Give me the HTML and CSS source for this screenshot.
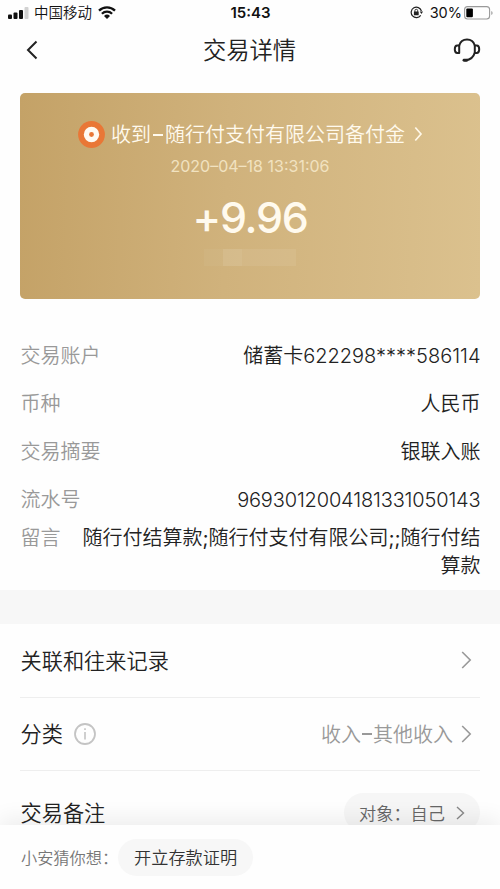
FILE: index.html
```html
<!DOCTYPE html>
<html lang="zh-CN">
<head>
<meta charset="utf-8">
<meta name="viewport" content="width=device-width, initial-scale=1">
<title>交易详情</title>
<link rel="stylesheet" href="styles.css">
</head>
<body>
<div class="screen">
  <div class="status">
    <div class="status-left">
      <svg class="signal" width="21" height="12" viewBox="0 0 21 12"><rect x="0" y="7.5" width="4" height="4.5" rx="1" fill="#111"/><rect x="5.5" y="5.5" width="4" height="6.5" rx="1" fill="#111"/><rect x="11" y="3" width="4" height="9" rx="1" fill="#111"/><rect x="16.5" y="0" width="4" height="12" rx="1" fill="#d2d2d2"/></svg>
      <span class="carrier">中国移动</span>
      <svg class="wifi" width="18" height="13" viewBox="0 0 18 13"><path d="M1 4.7a11.5 11.5 0 0 1 16 0M3.9 7.8a7.3 7.3 0 0 1 10.2 0" fill="none" stroke="#111" stroke-width="2.3"/><path d="M9 13l-3-3a4.4 4.4 0 0 1 6 0z" fill="#111"/></svg>
    </div>
    <div class="clock">15:43</div>
    <div class="status-right">
      <svg class="lock" width="13" height="13" viewBox="0 0 13 13"><path d="M10.7 9.3A5.2 5.2 0 1 1 11.4 5" fill="none" stroke="#222" stroke-width="1.2"/><path d="M9.7 5.5h3.3l-1.5 2.4z" fill="#222"/><rect x="3.9" y="5.6" width="4.8" height="3.6" rx=".5" fill="#222"/><path d="M4.9 6V4.7a1.4 1.4 0 0 1 2.8 0V6" fill="none" stroke="#222" stroke-width=".9"/></svg>
      <span class="percent">30%</span>
      <svg class="battery" width="29" height="14" viewBox="0 0 29 14"><rect x=".6" y=".6" width="25" height="12.4" rx="3" fill="none" stroke="#999" stroke-width="1.1"/><rect x="2.3" y="2.4" width="6.6" height="8.8" rx="1" fill="#000"/><path d="M27.3 5v4q1.3-.5 1.3-2t-1.3-2" fill="#999"/></svg>
    </div>
  </div>
  <header class="nav">
    <svg class="back" width="12" height="20" viewBox="0 0 12 20"><path d="M10.5 1.5L2 10l8.500 8.500" fill="none" stroke="#222" stroke-width="2"/></svg>
    <h1 class="title">交易详情</h1>
    <svg class="service" width="28" height="26" viewBox="0 0 28 26"><g fill="none" stroke="#222" stroke-width="2" stroke-linecap="round" stroke-linejoin="round"><path d="M6.200 8.500C7.400 4.300 10.300 2.600 14 2.600S20.600 4.300 21.800 8.500V15.500Q20 22.500 12.500 23.300"/><path d="M6.200 8.500v7.500H4.200Q1.800 16 1.800 12.250T4.200 8.500zM21.800 8.500h2Q26.200 8.500 26.200 12.250T23.800 16h-2"/><path d="M11 23.300h2.800" stroke-width="2.900"/></g></svg>
  </header>
  <section class="card">
    <div class="payer">
      <svg class="payer-logo" width="27" height="27" viewBox="0 0 27 27"><circle cx="13.500" cy="13.500" r="13.400" fill="#e97736"/><circle cx="13.500" cy="13.500" r="7.700" fill="#fffaf2"/><circle cx="13.500" cy="13.500" r="2.400" fill="#e97736"/></svg>
      <span class="payer-name">收到<span class="dash"></span>随行付支付有限公司备付金</span>
      <svg class="payer-arrow" width="9" height="16" viewBox="0 0 9 16"><path d="M1.300 1.500L7 8l-5.700 6.500" fill="none" stroke="#fff8e8" stroke-width="1.700"/></svg>
    </div>
    <div class="time">2020–04–18 13:31:06</div>
    <div class="amount">+9.96</div>
    <div class="mask"><i class="m1"></i><i class="m2"></i><i class="m3"></i></div>
  </section>
  <dl class="details">
    <div class="detail"><dt>交易账户</dt><dd>储蓄卡<span class="card-no">622298****586114</span></dd></div>
    <div class="detail"><dt>币种</dt><dd>人民币</dd></div>
    <div class="detail"><dt>交易摘要</dt><dd>银联入账</dd></div>
    <div class="detail"><dt>流水号</dt><dd class="serial">9693012004181331050143</dd></div>
    <div class="detail message"><dt>留言</dt><dd>随行付结算款;随行付支付有限公司;;随行付结<br>算款</dd></div>
  </dl>
  <div class="band"></div>
  <div class="list">
    <div class="item"><span class="label">关联和往来记录</span><svg class="arrow" width="11" height="18" viewBox="0 0 11 18"><path d="M1.200 1l8 8-8 8" fill="none" stroke="#999" stroke-width="1.600"/></svg></div>
    <div class="item"><span class="label">分类</span><svg class="info" width="22" height="22" viewBox="0 0 22 22"><circle cx="11" cy="11" r="10" fill="none" stroke="#c4c4c4" stroke-width="1.800"/><path d="M11 9v7.500M11 5.300v1.800" stroke="#c4c4c4" stroke-width="1.600"/></svg><span class="category">收入<span class="dash"></span>其他收入</span><svg class="arrow" width="11" height="18" viewBox="0 0 11 18"><path d="M1.200 1l8 8-8 8" fill="none" stroke="#999" stroke-width="1.600"/></svg></div>
    <div class="item note"><span class="label">交易备注</span><span class="target">对象：自己<svg class="target-arrow" width="9" height="14" viewBox="0 0 9 14"><path d="M1 1l6.500 6L1 13" fill="none" stroke="#888" stroke-width="1.400"/></svg></span></div>
  </div>
  <footer class="footer"><span class="guess">小安猜你想：</span><span class="chip">开立存款证明</span></footer>
</div>
</body>
</html>
```
FILE: styles.css
```css
* { box-sizing: border-box; }
body { margin: 0; background: #fff; font-family: Inter, "Noto Sans CJK SC DemiLight", "Noto Sans CJK SC", sans-serif; color: #222; }
svg { display: block; flex: none; }
.screen { position: relative; width: 500px; height: 889px; overflow: hidden; background: #fefefe; }

.status { display: grid; grid-template-columns: 1fr auto 1fr; align-items: center; height: 25px; padding: 0 7px 0 8px; color: #111; }
.status-left, .status-right { display: flex; align-items: center; }
.status-right { justify-content: flex-end; }
.carrier { margin-left: 5px; font-size: 14.500px; line-height: 20px; }
.wifi { margin-left: 6px; }
.clock { font-size: 15px; font-weight: 600; line-height: 20px; }
.percent { margin: 0 2px 0 7px; font-size: 14.500px; }

.nav { display: grid; grid-template-columns: 1fr auto 1fr; align-items: center; height: 50px; padding: 0 19px 0 26px; }
.title { margin: 2px 8px 0 0; font-size: 23.300px; font-weight: 400; line-height: 34px; }
.service { justify-self: end; }

.card { height: 206px; margin: 18px 20px 0; padding-top: 26px; border-radius: 5px; background: linear-gradient(92deg, #c4a267, #d0b27c 45%, #dbc18e); color: #fffaee; }
.payer { display: flex; align-items: center; height: 30px; padding-left: 58px; }
.payer-name { display: flex; align-items: center; margin: 2px 0 0 6px; font-size: 20px; line-height: 30px; }
.dash { display: inline-block; width: 10px; height: 1.500px; margin: 0 2px; background: currentColor; }
.payer .dash { margin: 0 2px; }
.payer-arrow { margin-left: 9px; }
.time { margin-top: 6px; text-align: center; font-size: 16px; line-height: 22px; color: #f1e2c0; }
.amount { margin-top: 15px; text-align: center; font-size: 43px; font-weight: 500; line-height: 50px; letter-spacing: -1.300px; }
.mask { display: flex; width: 92px; height: 17px; margin: 7px auto 0; }
.mask i { height: 100%; }
.m1 { width: 19px; background: rgba(255, 255, 255, .04); }
.m2 { width: 19px; background: rgba(255, 255, 255, .12); }
.m3 { width: 54px; background: rgba(255, 255, 255, .07); }

.details { margin: 33px 19.500px 0 20.500px; height: 258px; font-size: 20px; }
.detail { display: flex; justify-content: space-between; height: 48px; line-height: 48px; }
.detail dt { color: #999; }
.detail dd { margin: 0; text-align: right; white-space: nowrap; }
.card-no { font-weight: 350; letter-spacing: -.010px; }
.detail .serial { font-weight: 350; letter-spacing: -.160px; }
.message { height: 56px; line-height: 28px; }

.band { height: 34px; background: #f7f7f7; }
.list { padding: 0 20px; font-size: 21.200px; }
.item { display: flex; align-items: center; height: 73.500px; border-bottom: 1px solid #eee; }
.label { margin: 0 0 2px .5px; }
.arrow { margin-left: auto; margin-right: 8px; }
.info { margin-left: 11px; }
.category { display: flex; align-items: center; margin-left: auto; font-size: 20px; color: #999; }
.category .dash { margin: 0 1px; }
.category + .arrow { margin-left: 8px; }
.note { height: 83px; border: 0; justify-content: space-between; }
.target { display: flex; align-items: center; height: 39px; padding: 0 15px; border-radius: 20px; background: #f6f6f6; color: #666; font-size: 17.200px; }
.target-arrow { margin-left: 11px; }

.footer { position: absolute; left: 0; right: 0; bottom: 0; display: flex; align-items: center; height: 64px; padding-left: 21px; background: #fefefe; box-shadow: 0 -6px 22px rgba(0, 0, 0, .07); }
.guess { width: 97px; font-size: 16.200px; color: #777; white-space: nowrap; }
.chip { height: 37px; padding: 0 16px; border-radius: 19px; background: #f7f7f7; color: #333; font-size: 17.200px; line-height: 37px; }
```
